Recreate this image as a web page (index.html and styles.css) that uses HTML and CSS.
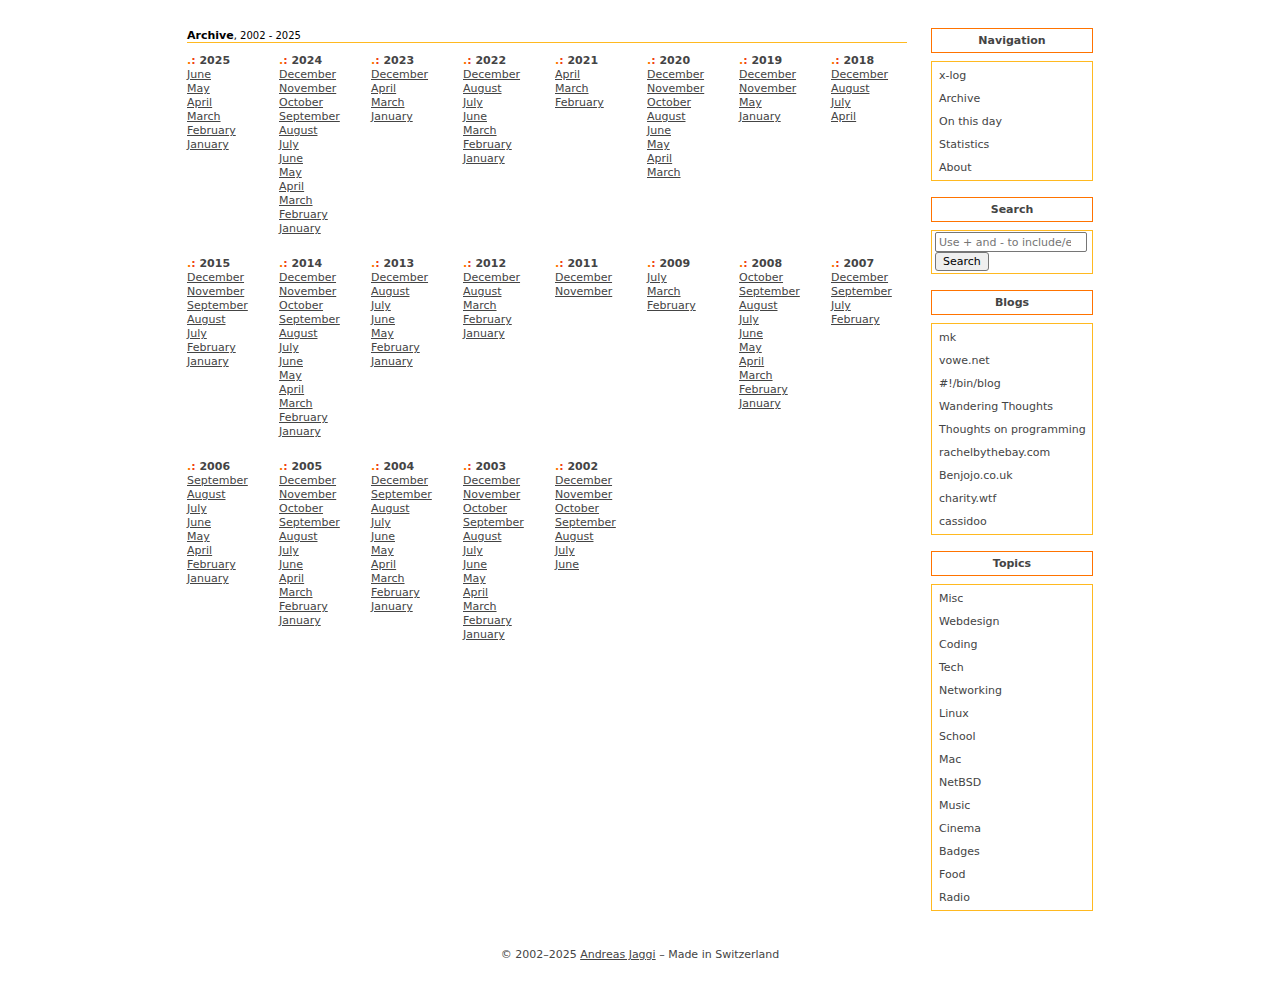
FILE: index.html
```html
<!DOCTYPE html>
<html lang="en">
<head>
<meta charset="utf-8">
<meta name="viewport" content="width=device-width, initial-scale=1">
<title>Archive</title>
<link rel="stylesheet" href="styles.css">
</head>
<body>
<div class="page">
<main class="main">
<h1 class="title"><strong>Archive</strong>, 2002 - 2025</h1>
<div class="years">
<section class="year"><h2><i>.</i><b>:</b> 2025</h2><a href="#">June</a><a href="#">May</a><a href="#">April</a><a href="#">March</a><a href="#">February</a><a href="#">January</a></section>
<section class="year"><h2><i>.</i><b>:</b> 2024</h2><a href="#">December</a><a href="#">November</a><a href="#">October</a><a href="#">September</a><a href="#">August</a><a href="#">July</a><a href="#">June</a><a href="#">May</a><a href="#">April</a><a href="#">March</a><a href="#">February</a><a href="#">January</a></section>
<section class="year"><h2><i>.</i><b>:</b> 2023</h2><a href="#">December</a><a href="#">April</a><a href="#">March</a><a href="#">January</a></section>
<section class="year"><h2><i>.</i><b>:</b> 2022</h2><a href="#">December</a><a href="#">August</a><a href="#">July</a><a href="#">June</a><a href="#">March</a><a href="#">February</a><a href="#">January</a></section>
<section class="year"><h2><i>.</i><b>:</b> 2021</h2><a href="#">April</a><a href="#">March</a><a href="#">February</a></section>
<section class="year"><h2><i>.</i><b>:</b> 2020</h2><a href="#">December</a><a href="#">November</a><a href="#">October</a><a href="#">August</a><a href="#">June</a><a href="#">May</a><a href="#">April</a><a href="#">March</a></section>
<section class="year"><h2><i>.</i><b>:</b> 2019</h2><a href="#">December</a><a href="#">November</a><a href="#">May</a><a href="#">January</a></section>
<section class="year"><h2><i>.</i><b>:</b> 2018</h2><a href="#">December</a><a href="#">August</a><a href="#">July</a><a href="#">April</a></section>
<section class="year"><h2><i>.</i><b>:</b> 2015</h2><a href="#">December</a><a href="#">November</a><a href="#">September</a><a href="#">August</a><a href="#">July</a><a href="#">February</a><a href="#">January</a></section>
<section class="year"><h2><i>.</i><b>:</b> 2014</h2><a href="#">December</a><a href="#">November</a><a href="#">October</a><a href="#">September</a><a href="#">August</a><a href="#">July</a><a href="#">June</a><a href="#">May</a><a href="#">April</a><a href="#">March</a><a href="#">February</a><a href="#">January</a></section>
<section class="year"><h2><i>.</i><b>:</b> 2013</h2><a href="#">December</a><a href="#">August</a><a href="#">July</a><a href="#">June</a><a href="#">May</a><a href="#">February</a><a href="#">January</a></section>
<section class="year"><h2><i>.</i><b>:</b> 2012</h2><a href="#">December</a><a href="#">August</a><a href="#">March</a><a href="#">February</a><a href="#">January</a></section>
<section class="year"><h2><i>.</i><b>:</b> 2011</h2><a href="#">December</a><a href="#">November</a></section>
<section class="year"><h2><i>.</i><b>:</b> 2009</h2><a href="#">July</a><a href="#">March</a><a href="#">February</a></section>
<section class="year"><h2><i>.</i><b>:</b> 2008</h2><a href="#">October</a><a href="#">September</a><a href="#">August</a><a href="#">July</a><a href="#">June</a><a href="#">May</a><a href="#">April</a><a href="#">March</a><a href="#">February</a><a href="#">January</a></section>
<section class="year"><h2><i>.</i><b>:</b> 2007</h2><a href="#">December</a><a href="#">September</a><a href="#">July</a><a href="#">February</a></section>
<section class="year"><h2><i>.</i><b>:</b> 2006</h2><a href="#">September</a><a href="#">August</a><a href="#">July</a><a href="#">June</a><a href="#">May</a><a href="#">April</a><a href="#">February</a><a href="#">January</a></section>
<section class="year"><h2><i>.</i><b>:</b> 2005</h2><a href="#">December</a><a href="#">November</a><a href="#">October</a><a href="#">September</a><a href="#">August</a><a href="#">July</a><a href="#">June</a><a href="#">April</a><a href="#">March</a><a href="#">February</a><a href="#">January</a></section>
<section class="year"><h2><i>.</i><b>:</b> 2004</h2><a href="#">December</a><a href="#">September</a><a href="#">August</a><a href="#">July</a><a href="#">June</a><a href="#">May</a><a href="#">April</a><a href="#">March</a><a href="#">February</a><a href="#">January</a></section>
<section class="year"><h2><i>.</i><b>:</b> 2003</h2><a href="#">December</a><a href="#">November</a><a href="#">October</a><a href="#">September</a><a href="#">August</a><a href="#">July</a><a href="#">June</a><a href="#">May</a><a href="#">April</a><a href="#">March</a><a href="#">February</a><a href="#">January</a></section>
<section class="year"><h2><i>.</i><b>:</b> 2002</h2><a href="#">December</a><a href="#">November</a><a href="#">October</a><a href="#">September</a><a href="#">August</a><a href="#">July</a><a href="#">June</a></section>
</div>
</main>
<aside class="sidebar">
<section class="block">
<h2 class="heading">Navigation</h2>
<nav class="box links"><a href="#">x-log</a><a href="#">Archive</a><a href="#">On this day</a><a href="#">Statistics</a><a href="#">About</a></nav>
</section>
<section class="block">
<h2 class="heading"><label for="q">Search</label></h2>
<form class="box search"><input id="q" class="field" type="text" placeholder="Use + and - to include/exclude"><button class="submit" type="submit">Search</button></form>
</section>
<section class="block">
<h2 class="heading">Blogs</h2>
<nav class="box links"><a href="#">mk</a><a href="#">vowe.net</a><a href="#">#!/bin/blog</a><a href="#">Wandering Thoughts</a><a href="#">Thoughts on programming</a><a href="#">rachelbythebay.com</a><a href="#">Benjojo.co.uk</a><a href="#">charity.wtf</a><a href="#">cassidoo</a></nav>
</section>
<section class="block">
<h2 class="heading">Topics</h2>
<nav class="box links"><a href="#">Misc</a><a href="#">Webdesign</a><a href="#">Coding</a><a href="#">Tech</a><a href="#">Networking</a><a href="#">Linux</a><a href="#">School</a><a href="#">Mac</a><a href="#">NetBSD</a><a href="#">Music</a><a href="#">Cinema</a><a href="#">Badges</a><a href="#">Food</a><a href="#">Radio</a></nav>
</section>
</aside>
</div>
<footer class="footer">© 2002–2025 <a href="#">Andreas Jaggi</a> – Made in Switzerland</footer>
</body>
</html>
```
FILE: styles.css
```css
* { box-sizing: border-box; }
body {
  margin: 0;
  padding: 28px 16px;
  background: #fff;
  color: #444;
  font: 11px/14px Verdana, "DejaVu Sans", sans-serif;
}
h1, h2 { margin: 0; font-size: 11px; }
a { color: inherit; }
.page {
  display: flex;
  gap: 24px;
  max-width: 906px;
  margin: 0 auto;
}
.main { flex: 1; min-width: 0; }
.title {
  padding-top: 2px;
  border-bottom: 1px solid #ffb920;
  color: #000;
  font-size: 10px;
  font-weight: normal;
  line-height: 12px;
}
.title strong { font-size: 11px; }
.years {
  display: grid;
  grid-template-columns: repeat(8, minmax(0, 1fr));
  gap: 21px 16px;
  margin-top: 11px;
}
.year {
  display: flex;
  flex-direction: column;
  align-items: flex-start;
}
.year i { color: #ff7300; font-style: normal; }
.year b { color: #f04010; }
.sidebar {
  display: flex;
  flex-direction: column;
  flex: 0 0 162px;
  gap: 16px;
}
.block { display: flex; flex-direction: column; gap: 8px; }
.heading {
  padding: 4px;
  border: 1px solid #ff7300;
  line-height: 15px;
  text-align: center;
}
.box { border: 1px solid #ffb920; }
.links {
  display: flex;
  flex-direction: column;
  padding: 2px 0 1px 7px;
  line-height: 23px;
  white-space: nowrap;
}
.links a { text-decoration: none; }
.search {
  display: flex;
  flex-direction: column;
  align-items: flex-start;
  padding: 1px 5px 2px 3px;
}
.field, .submit {
  border: 1px solid #767676;
  color: #000;
  font: inherit;
}
.field {
  width: 100%;
  height: 20px;
  padding: 0 15px 0 3px;
  border-radius: 2px;
  background: #fff;
}
.field::placeholder { color: #757575; }
.submit {
  height: 19px;
  padding: 0 7px;
  border-radius: 3px;
  background: #efefef;
}
.footer { margin-top: 37px; text-align: center; }
```
